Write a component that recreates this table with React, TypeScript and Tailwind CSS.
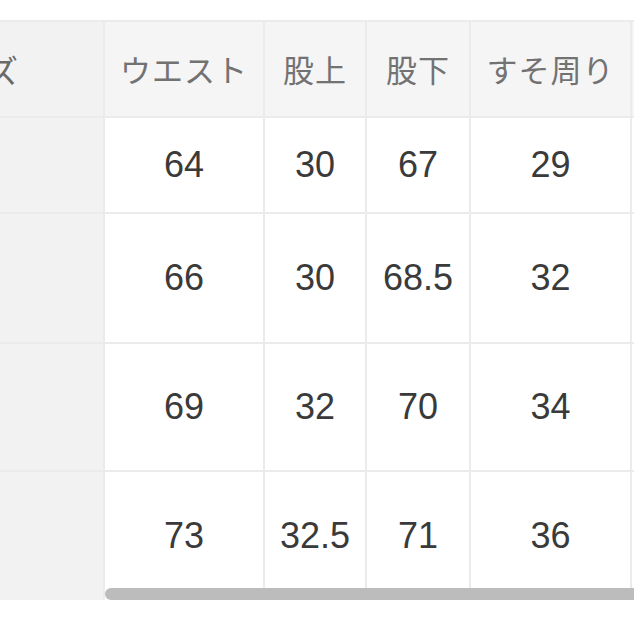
import { Fragment } from 'react'

const headers = ['ウエスト', '股上', '股下', 'すそ周り', '']

const rows = [
  { h: 'h-[94px]', values: ['64', '30', '67', '29', ''] },
  { h: 'h-[128px]', values: ['66', '30', '68.5', '32', ''] },
  { h: 'h-[126px]', values: ['69', '32', '70', '34', ''] },
  { h: 'h-[128px]', values: ['73', '32.5', '71', '36', ''] },
]

export default function App() {
  return (
    <div
      className="w-[634px] h-[634px] overflow-hidden bg-white"
      style={{ fontFamily: '"Liberation Sans", "Noto Sans CJK JP", sans-serif' }}
    >
      <div className="relative mt-[20px]">
        <div className="grid grid-cols-[103px_158px_100px_102px_159px_120px] gap-[2px] pt-[2px] bg-[#ebebeb] w-max">
          {/* header; the size column is scrolled partly out of view */}
          <div className="h-[94px] bg-[#f2f2f2] overflow-hidden flex items-center">
            <span className="whitespace-nowrap -ml-[77px] text-[32px] text-[#6a6a6a]" style={{ fontFamily: '"Noto Sans CJK JP", sans-serif' }}>
              サイズ
            </span>
          </div>
          {headers.map((t, i) => (
            <div key={i} className="h-[94px] bg-[#f5f5f5] flex items-center justify-center">
              <span className="text-[31px] text-[#727272] tracking-[1px]" style={{ fontFamily: '"Noto Sans CJK JP", sans-serif' }}>
                {t}
              </span>
            </div>
          ))}

          {/* body */}
          {rows.map((r, ri) => (
            <Fragment key={ri}>
              <div className={`${r.h} bg-[#f2f2f2]`} />
              {r.values.map((v, ci) => (
                <div key={ci} className={`${r.h} bg-white flex items-center justify-center`}>
                  <span className="text-[36px] text-[#3a3a3a]">{v}</span>
                </div>
              ))}
            </Fragment>
          ))}
        </div>

        {/* scroll indicator */}
        <div className="absolute left-[105px] top-[568px] w-[560px] h-[12px] rounded-l-full bg-[#bcbcbc]" />
      </div>
    </div>
  )
}
